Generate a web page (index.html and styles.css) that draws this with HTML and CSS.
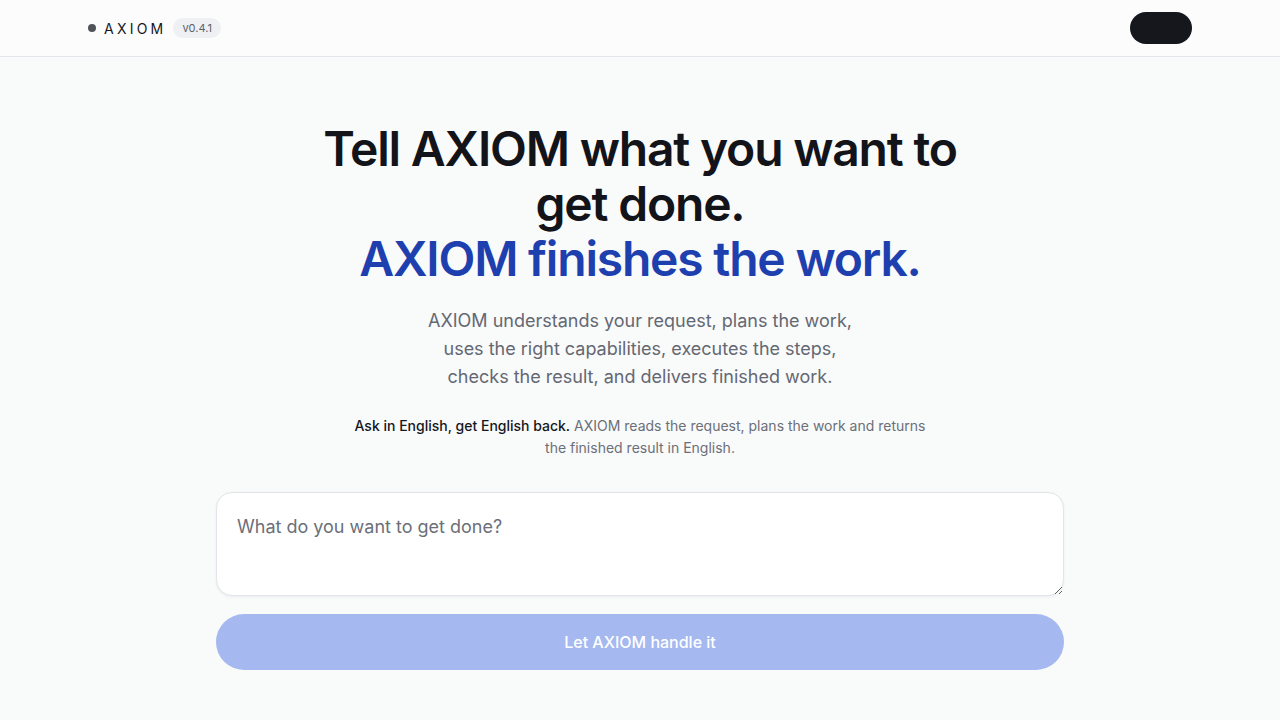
FILE: index.html
```html
<!DOCTYPE html>
<html lang="en">
<head>
<meta charset="utf-8">
<title>AXIOM</title>
<link rel="stylesheet" href="styles.css">
</head>
<body>
<header class="topbar">
  <div class="topbar-inner">
    <div class="brand">
      <span class="brand-dot"></span>
      <span class="brand-name">AXIOM</span>
      <span class="version">v0.4.1</span>
    </div>
    <button class="account-btn" aria-label="Account"></button>
  </div>
</header>
<main class="hero">
  <h1 class="headline">Tell AXIOM what you want to<br>get done.<br><span class="accent">AXIOM finishes the work.</span></h1>
  <p class="lead">AXIOM understands your request, plans the work,<br>uses the right capabilities, executes the steps,<br>checks the result, and delivers finished work.</p>
  <p class="note"><strong>Ask in English, get English back.</strong> AXIOM reads the request, plans the work and returns the finished result in English.</p>
  <form class="ask">
    <textarea class="ask-input" placeholder="What do you want to get done?"></textarea>
    <button type="button" class="ask-submit" disabled>Let AXIOM handle it</button>
  </form>
</main>
</body>
</html>
```
FILE: styles.css
```css
* { box-sizing: border-box; }
html, body { margin: 0; padding: 0; }
body {
  background: #f9fafa;
  font-family: Inter, "Noto Sans", sans-serif;
  color: #111318;
}
.topbar {
  height: 57px;
  background: #fcfcfd;
  border-bottom: 1px solid #e3e5ea;
}
.topbar-inner {
  max-width: 1104px;
  height: 56px;
  margin: 0 auto;
  display: flex;
  align-items: center;
  justify-content: space-between;
}
.brand { display: flex; align-items: center; }
.brand-dot {
  width: 8px; height: 8px; border-radius: 50%;
  background: #505257;
  margin-right: 8px;
}
.brand-name {
  font-size: 14px;
  font-weight: 400;
  letter-spacing: 0.23em;
  color: #16181d;
  margin-right: 7px;
}
.version {
  font-size: 11px;
  color: #5d616a;
  background: #eef0f3;
  border-radius: 10px;
  padding: 3px 9px;
  line-height: 14px;
}
.account-btn {
  width: 62px; height: 32px;
  border: 0; border-radius: 16px;
  background: #15171c;
  padding: 0;
}
.hero {
  padding-top: 64px;
  display: flex;
  flex-direction: column;
  align-items: center;
  text-align: center;
}
.headline {
  margin: 0;
  font-size: 48px;
  line-height: 55px;
  font-weight: 600;
  letter-spacing: -0.025em;
  color: #121419;
}
.accent { color: #1e40af; }
.lead {
  margin: 21px 0 0;
  font-size: 18px;
  line-height: 28px;
  color: #646873;
}
.note {
  margin: 24px 0 0;
  max-width: 590px;
  font-size: 14px;
  line-height: 22px;
  color: #6b6f79;
}
.note strong { font-weight: 500; color: #15171c; }
.ask {
  margin-top: 33px;
  width: 848px;
  display: flex;
  flex-direction: column;
  gap: 18px;
}
.ask-input {
  height: 104px;
  width: 100%;
  border: 1px solid #e2e4e9;
  border-radius: 16px;
  background: #ffffff;
  box-shadow: 0 1px 3px rgba(16, 24, 40, 0.06);
  padding: 22px 20px;
  font-family: inherit;
  font-size: 18px;
  line-height: 24px;
  color: #111318;
  resize: vertical;
  outline: none;
}
.ask-input::placeholder { color: #6b6f79; }
.ask-submit {
  height: 56px;
  width: 100%;
  border: 0;
  border-radius: 28px;
  background: #a5b8f0;
  color: #ffffff;
  font-family: inherit;
  font-size: 16px;
  font-weight: 500;
}
```
